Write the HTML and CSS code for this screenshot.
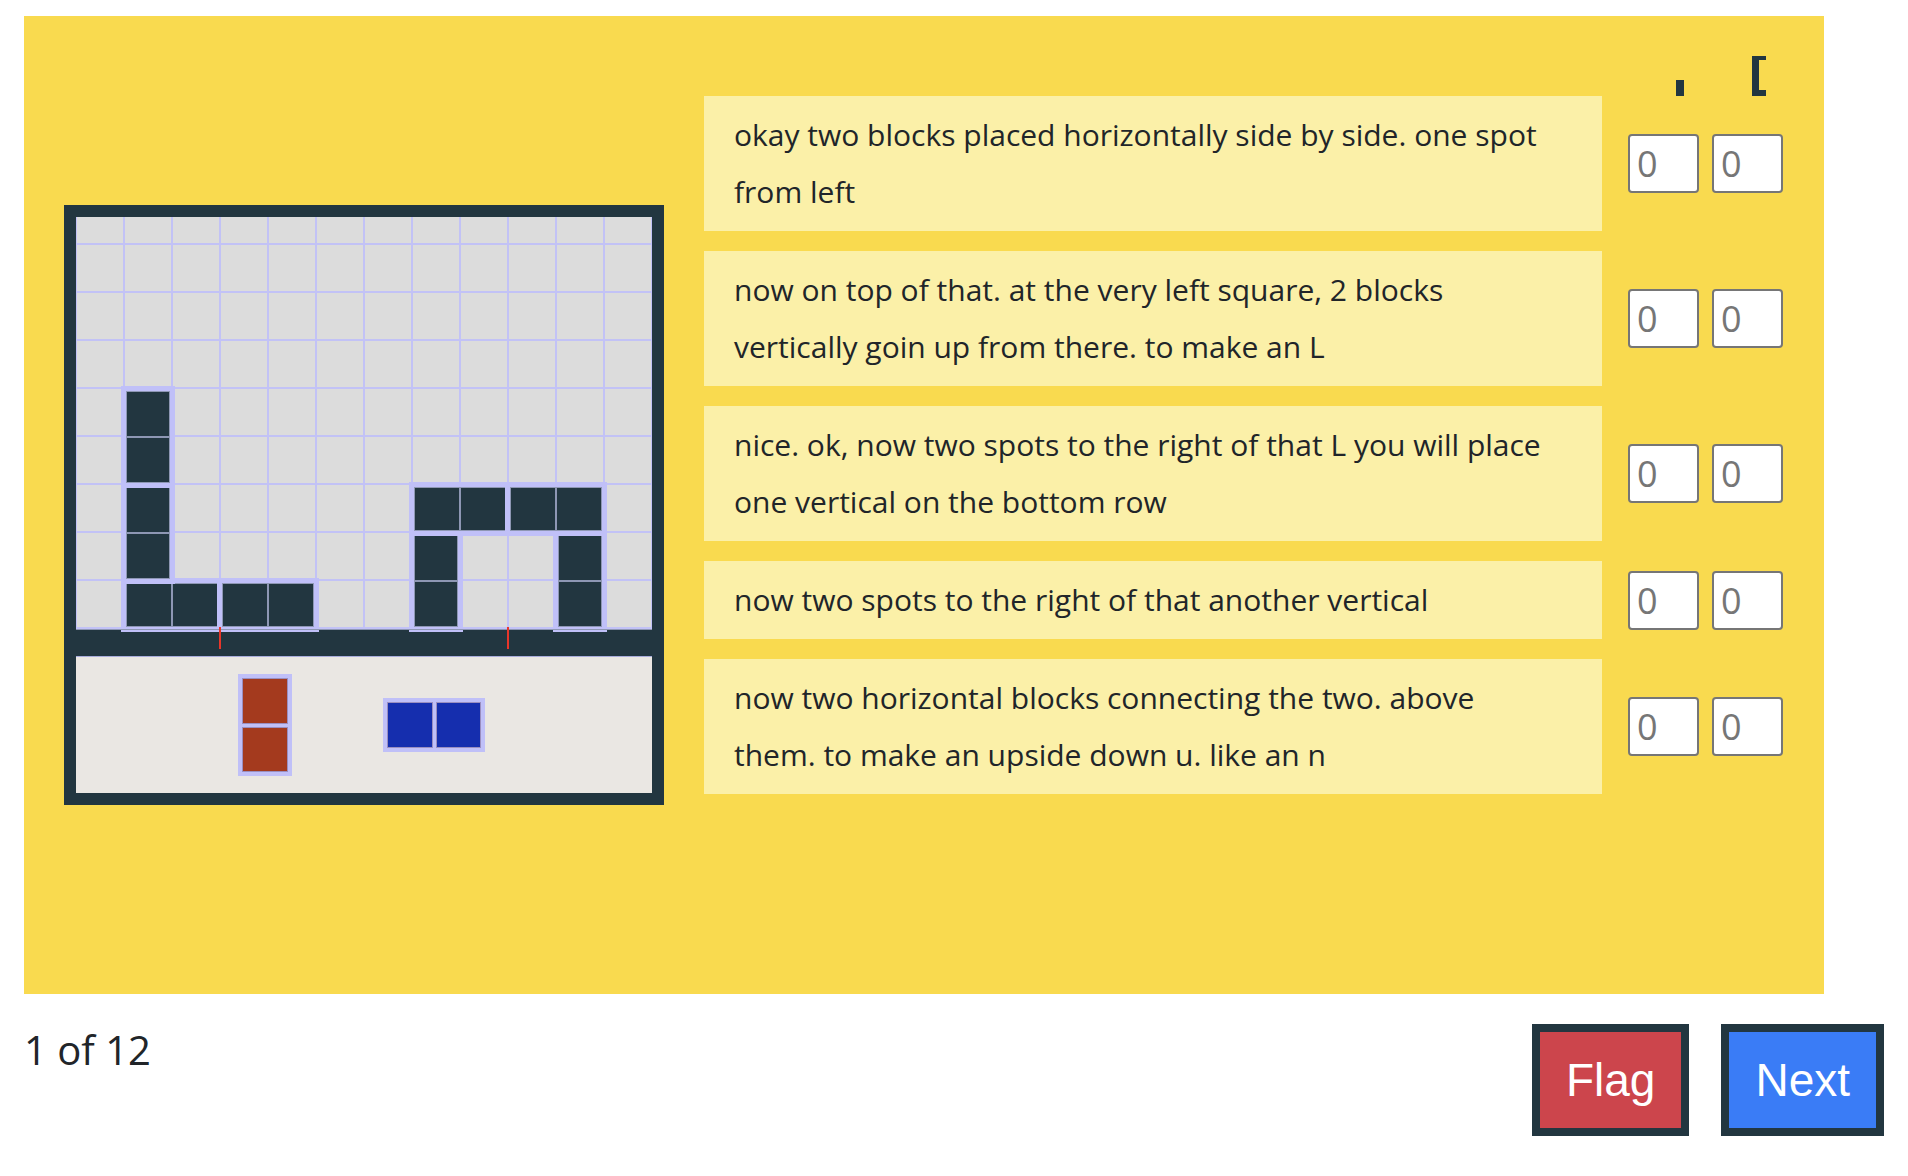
FILE: index.html
```html
<!DOCTYPE html>
<html lang="en">
<head>
<meta charset="utf-8">
<title>Task 1 of 12</title>
<link rel="stylesheet" href="styles.css">
</head>
<body>
<main class="panel">
  <section class="board">
    <div class="grid">
      <div class="piece h" style="left:45px;top:361px"><i></i><i></i></div>
      <div class="piece h" style="left:141px;top:361px"><i></i><i></i></div>
      <div class="piece v" style="left:45px;top:265px"><i></i><i></i></div>
      <div class="piece v" style="left:45px;top:169px"><i></i><i></i></div>
      <div class="piece v" style="left:333px;top:313px"><i></i><i></i></div>
      <div class="piece v" style="left:477px;top:313px"><i></i><i></i></div>
      <div class="piece h" style="left:333px;top:265px"><i></i><i></i></div>
      <div class="piece h" style="left:429px;top:265px"><i></i><i></i></div>
    </div>
    <div class="strip">
      <span class="tick" style="left:143px"></span>
      <span class="tick" style="left:431px"></span>
    </div>
    <div class="tray">
      <div class="tpiece v red" style="left:162px;top:17px"><i></i><i></i></div>
      <div class="tpiece h blue" style="left:307px;top:41px"><i></i><i></i></div>
    </div>
  </section>
  <section class="prompts">
    <div class="head">
      <div class="hcol"><span class="mark-dot"></span></div>
      <div class="hcol"><span class="mark-bracket"></span></div>
    </div>
    <div class="rows">
      <div class="row">
        <p class="say">okay two blocks placed horizontally side by side. one spot from left</p>
        <div class="nums"><input class="num" type="text" value="0"><input class="num" type="text" value="0"></div>
      </div>
      <div class="row">
        <p class="say">now on top of that. at the very left square, 2 blocks vertically goin up from there. to make an L</p>
        <div class="nums"><input class="num" type="text" value="0"><input class="num" type="text" value="0"></div>
      </div>
      <div class="row">
        <p class="say">nice. ok, now two spots to the right of that L you will place one vertical on the bottom row</p>
        <div class="nums"><input class="num" type="text" value="0"><input class="num" type="text" value="0"></div>
      </div>
      <div class="row">
        <p class="say">now two spots to the right of that another vertical</p>
        <div class="nums"><input class="num" type="text" value="0"><input class="num" type="text" value="0"></div>
      </div>
      <div class="row">
        <p class="say">now two horizontal blocks connecting the two. above them. to make an upside down u. like an n</p>
        <div class="nums"><input class="num" type="text" value="0"><input class="num" type="text" value="0"></div>
      </div>
    </div>
  </section>
</main>
<footer class="foot">
  <div class="count">1 of 12</div>
  <div class="actions">
    <button class="btn flag" type="button">Flag</button>
    <button class="btn next" type="button">Next</button>
  </div>
</footer>
</body>
</html>
```
FILE: styles.css
```css
* { box-sizing: border-box; }
html, body { margin: 0; background: #ffffff; }
body {
  padding: 16px 24px 0 24px;
  font-family: "Open Sans", "Noto Sans", sans-serif;
  color: #212529;
}

.panel {
  width: 1800px;
  height: 978px;
  padding: 40px;
  background: #f9da4f;
  display: flex;
  gap: 40px;
  align-items: flex-start;
}

/* board */
.board {
  flex: none;
  align-self: center;
  width: 600px;
  height: 600px;
  padding: 12px;
  background: #223640;
  display: flex;
  flex-direction: column;
}
.grid {
  position: relative;
  height: 412px;
  background-color: #dcdcdc;
  background-image:
    linear-gradient(to right, #c2c2f6 2px, transparent 2px),
    linear-gradient(to bottom, #c2c2f6 2px, transparent 2px);
  background-size: 48px 48px;
  background-position: -1px 26px;
}
.piece {
  position: absolute;
  background: #c0c0f8;
  padding: 6px;
  display: grid;
  gap: 2px;
}
.piece.v { width: 54px; height: 102px; grid-template-rows: 1fr 1fr; }
.piece.h { width: 102px; height: 54px; grid-template-columns: 1fr 1fr; }
.piece i { display: block; background: #223640; box-shadow: 0 0 0 1px #8e97b4; }

.strip {
  position: relative;
  height: 27px;
  border-top: 1px solid #8e97b4;
}
.tick {
  position: absolute;
  top: -3px;
  width: 2px;
  height: 22px;
  background: #e8362a;
}
.tray {
  position: relative;
  flex: 1;
  background: #eae7e3;
  border-top: 1px solid #a9addb;
}
.tpiece {
  position: absolute;
  background: #c0c0f8;
  padding: 5px;
  display: grid;
  gap: 5px;
}
.tpiece.v { width: 54px; height: 102px; grid-template-rows: 1fr 1fr; }
.tpiece.h { width: 102px; height: 54px; grid-template-columns: 1fr 1fr; }
.tpiece i { display: block; box-shadow: 0 0 0 1px #9a8fc0; }
.tpiece.red i { background: #a43a1e; }
.tpiece.blue i { background: #152eae; }

/* prompts */
.prompts {
  flex: none;
  display: flex;
  flex-direction: column;
}
.head {
  height: 40px;
  display: flex;
  align-items: flex-end;
  gap: 13px;
  padding-left: 924px;
}
.hcol {
  width: 71px;
  display: flex;
  align-items: flex-end;
}
.mark-dot {
  display: block;
  margin-left: 48px;
  width: 8px;
  height: 16px;
  background: #223640;
}
.mark-bracket {
  display: block;
  margin-left: 40px;
  width: 14px;
  height: 40px;
  border-left: 7px solid #223640;
  border-top: 4px solid #223640;
  border-bottom: 6px solid #223640;
}
.rows {
  display: flex;
  flex-direction: column;
  gap: 20px;
}
.row {
  display: flex;
  align-items: center;
  gap: 26px;
}
.say {
  flex: none;
  width: 898px;
  margin: 0;
  padding: 10px 52px 11px 30px;
  background: #fbf0a8;
  font-size: 30px;
  line-height: 57px;
  color: #212529;
}
.nums {
  display: flex;
  gap: 13px;
}
.num {
  width: 71px;
  height: 59px;
  margin: 0;
  padding: 0 7px;
  border: 2px solid #767676;
  border-radius: 4px;
  background: #ffffff;
  font-family: "Open Sans", "Noto Sans", sans-serif;
  font-size: 36px;
  color: #767676;
}

/* footer */
.foot {
  margin-top: 30px;
  display: flex;
  justify-content: space-between;
  align-items: flex-start;
}
.count {
  font-size: 40px;
  line-height: 52px;
  color: #212529;
}
.actions {
  display: flex;
  gap: 32px;
}
.btn {
  margin: 0;
  border: 8px solid #223640;
  border-radius: 0;
  padding: 21px 26px;
  font-family: "Liberation Sans", Arial, sans-serif;
  font-size: 46px;
  line-height: 54px;
  color: #ffffff;
}
.btn.flag { background: #cc454c; }
.btn.next { background: #3a7cf6; }
```
